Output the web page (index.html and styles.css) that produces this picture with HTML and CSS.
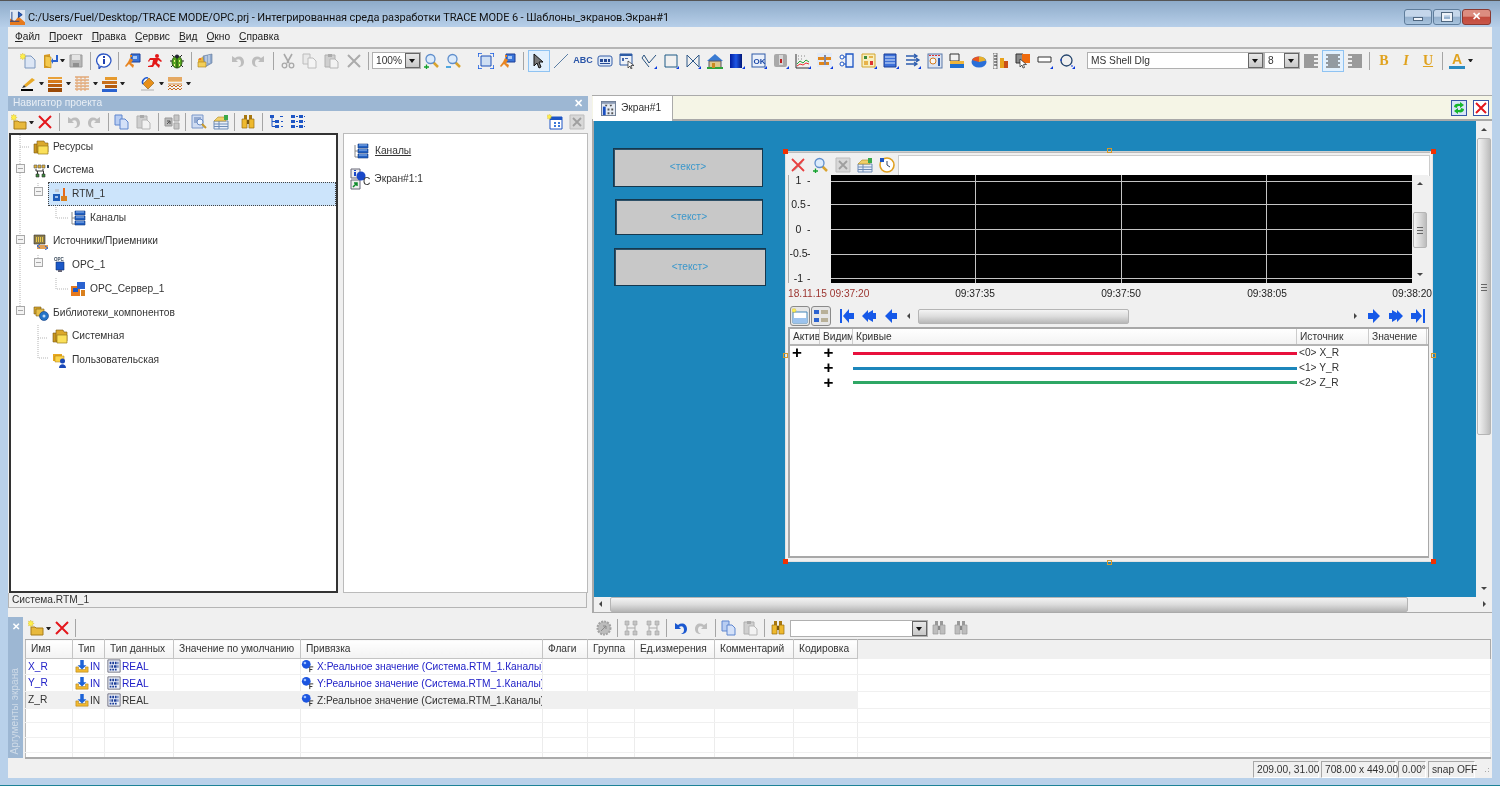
FILE: index.html
```html
<!DOCTYPE html>
<html lang="ru">
<head>
<meta charset="utf-8">
<title>TRACE MODE 6</title>
<link rel="stylesheet" href="styles.css">
</head>
<body>
<svg class="sprite" xmlns="http://www.w3.org/2000/svg">
<defs>
<symbol id="star" viewBox="0 0 16 16"><path d="M4 0l1 2.500L7.500 1.500l-1 2.500 2.500 1-2.500 1 1 2.500-2.500-1-1 2.500-1-2.500-2.500 1 1-2.500-2.500-1 2.500-1-1-2.500 2.500 1z" fill="#fff04a" stroke="#c8a400" stroke-width=".4"/></symbol>
<symbol id="app" viewBox="0 0 16 16"><rect width="16" height="16" fill="#dfe6f2"/><path d="M0 16V9l5 3 4-5 7 6v3z" fill="#e67a1e"/><path d="M2 2v10M0 12h10M9 2l4 3-4 3z" stroke="#1a3f8a" fill="#2a5fc0"/></symbol>
<symbol id="new" viewBox="0 0 16 16"><path d="M5 3h6l4 4v8H5z" fill="#dce6f5" stroke="#7d97bd"/><use href="#star" width="11" height="11"/></symbol>
<symbol id="fnew" viewBox="0 0 16 16"><path d="M3 7h4l1 1h7v7H3z" fill="#e8b93c" stroke="#a87d18"/><use href="#star" width="11" height="11"/></symbol>
<symbol id="open" viewBox="0 0 16 16"><path d="M2 2l6-1v14H2z" fill="#d99a22"/><path d="M3 3l6 1v11l-6-2z" fill="#f4c94e" stroke="#b58418" stroke-width=".6"/><path d="M14 2v5h-3l0-2-2 3 2 3v-2h5V2z" fill="#2a62d0"/></symbol>
<symbol id="save" viewBox="0 0 16 16"><path d="M2 2h12v12H2z" fill="#b8b8b8" stroke="#9a9a9a"/><path d="M4 2h8v5H4z" fill="#e4e4e4"/><path d="M5 10h6v4H5z" fill="#8f8f8f"/></symbol>
<symbol id="info" viewBox="0 0 16 16"><path d="M8 1a7 6.500 0 1 1-3 12.400L3 16v-3.700A7 6.500 0 0 1 8 1z" fill="#fff" stroke="#2b55c4" stroke-width="1.300"/><path d="M7 3h2v2H7zM7 6h2v5H7z" fill="#1f3fb0"/></symbol>
<symbol id="runmap" viewBox="0 0 16 16"><path d="M6 1h9v8H6z" fill="#3a74d8" stroke="#1c3f96"/><path d="M8 3h4v3H8z" fill="#a9c8f5"/><path d="M5 5l3 2-2 3 3 2-1 3-4-4-3 3-1-1 3-4zM5 2h2v2H5z" fill="#e88522"/></symbol>
<symbol id="run" viewBox="0 0 16 16"><circle cx="10" cy="3" r="2" fill="#e21818"/><path d="M8 5l4 0 3 3-1 1-3-2-1 3 3 2-1 3-4-4-2 3-5 0 0-1 4-1 1-5-3 0-1 2-1-1 2-3z" fill="#e21818"/></symbol>
<symbol id="bug" viewBox="0 0 16 16"><path d="M3 2l2 2M13 2l-2 2M1 8h2M15 8h-2M2 14l2-2M14 14l-2-2" stroke="#222"/><ellipse cx="8" cy="9" rx="5" ry="6" fill="#57a81e" stroke="#2a5a10"/><path d="M8 3v12" stroke="#1d3d0a"/><circle cx="8" cy="3.500" r="2" fill="#223"/><path d="M5 7h1v2H5zM10 7h1v2h-1zM5 11h1v2H5zM10 11h1v2h-1z" fill="#ee8"/></symbol>
<symbol id="cube" viewBox="0 0 16 16"><path d="M1 6l7-3v11l-7-1z" fill="#e8b437"/><path d="M6 3l9-2v9l-7 4z" fill="#8fa8cc" stroke="#62789a" stroke-width=".6"/><path d="M9 3v9M12 2v8" stroke="#dfe7f3"/><path d="M1 9h8v5H1z" fill="#f3cf5a" stroke="#a87d18" stroke-width=".6"/><path d="M2 6l1-1 1 1-1 1z" fill="#e33"/></symbol>
<symbol id="undo" viewBox="0 0 16 16"><path d="M3 3v6h6L7 7c3-2 5 0 5 3 0 2-1 3-3 4 4 0 6-2 6-5 0-5-5-7-9-4z" fill="#bdbdbd"/></symbol>
<symbol id="undob" viewBox="0 0 16 16"><path d="M3 3v6h6L7 7c3-2 5 0 5 3 0 2-1 3-3 4 4 0 6-2 6-5 0-5-5-7-9-4z" fill="#1b58d0"/></symbol>
<symbol id="redo" viewBox="0 0 16 16"><path d="M13 3v6H7l2-2c-3-2-5 0-5 3 0 2 1 3 3 4-4 0-6-2-6-5 0-5 5-7 9-4z" fill="#bdbdbd"/></symbol>
<symbol id="cut" viewBox="0 0 16 16"><path d="M4 1l5 9M12 1L7 10" stroke="#a9a9a9" stroke-width="1.600"/><circle cx="4.500" cy="12.500" r="2.300" fill="none" stroke="#a9a9a9" stroke-width="1.300"/><circle cx="11.500" cy="12.500" r="2.300" fill="none" stroke="#a9a9a9" stroke-width="1.300"/></symbol>
<symbol id="copy" viewBox="0 0 16 16"><path d="M1 1h7v10H1z" fill="#e9e9e9" stroke="#bcbcbc"/><path d="M6 5h5l3 3v7H6z" fill="#f4f4f4" stroke="#bcbcbc"/></symbol>
<symbol id="copyb" viewBox="0 0 16 16"><path d="M1 1h7v10H1z" fill="#b8cdf2" stroke="#5f86cf"/><path d="M6 5h5l3 3v7H6z" fill="#d4e1f8" stroke="#5f86cf"/></symbol>
<symbol id="paste" viewBox="0 0 16 16"><path d="M1 2h10v12H1z" fill="#cfcfcf" stroke="#b0b0b0"/><path d="M4 1h4v3H4z" fill="#aaa"/><path d="M6 6h5l3 3v6H6z" fill="#f2f2f2" stroke="#b5b5b5"/></symbol>
<symbol id="xg" viewBox="0 0 16 16"><path d="M2 2l12 12M14 2L2 14" stroke="#ababab" stroke-width="2"/></symbol>
<symbol id="xr" viewBox="0 0 16 16"><path d="M2 2l12 12M14 2L2 14" stroke="#e4171c" stroke-width="2"/></symbol>
<symbol id="zp" viewBox="0 0 16 16"><path d="M9 9l5 5" stroke="#d9a32e" stroke-width="2.500"/><circle cx="6.500" cy="6" r="4.500" fill="#dcebfb" stroke="#5f8ecc" stroke-width="1.300"/><path d="M0 14h5M2.500 11.500v5" stroke="#12a12c" stroke-width="1.300"/></symbol>
<symbol id="zm" viewBox="0 0 16 16"><path d="M9 9l5 5" stroke="#d9a32e" stroke-width="2.500"/><circle cx="6.500" cy="6" r="4.500" fill="#dcebfb" stroke="#5f8ecc" stroke-width="1.300"/><path d="M0 14h5" stroke="#1b8fd8" stroke-width="1.500"/></symbol>
<symbol id="fit" viewBox="0 0 16 16"><path d="M3 3h10v10H3z" fill="#cfdff3" stroke="#1b4fb8"/><path d="M0 4V0h4M12 0h4v4M16 12v4h-4M4 16H0v-4" fill="none" stroke="#1559e0" stroke-width="1.500"/></symbol>
<symbol id="ptr" viewBox="0 0 16 16"><path d="M3 1v12l3-3 2 5 2-1-2-5h4z" fill="#777" stroke="#111"/></symbol>
<symbol id="line" viewBox="0 0 16 16"><path d="M1 15L15 1" stroke="#5a7ea5"/></symbol>
<symbol id="lcd" viewBox="0 0 16 16"><rect x="1" y="3" width="14" height="10" rx="2" fill="#dfe9f7" stroke="#375fa8"/><path d="M3 6h3v3H3zM7 6h3v3H7zM11 6h2v3h-2zM3 10h10v1H3z" fill="#274a94"/></symbol>
<symbol id="win" viewBox="0 0 16 16"><path d="M1 1h12v11H1z" fill="#eef2f8" stroke="#2d5ba5"/><path d="M1 1h12v2H1z" fill="#2d5ba5"/><path d="M3 5h2v3H3zM6 5h3v1H6z" fill="#46a"/><path d="M9 8v7l2-2 1 3 1-.500-1-3h3z" fill="#fff" stroke="#222" stroke-width=".7"/></symbol>
<symbol id="poly" viewBox="0 0 16 16"><path d="M1 5l2-3 5 8 7-8M1 5l7 9" fill="none" stroke="#28527f"/><path d="M13 16h3v-3z" fill="#0a3be0"/></symbol>
<symbol id="rect" viewBox="0 0 16 16"><path d="M2 2h12v12H2z" fill="none" stroke="#1f5a86"/><path d="M13 16h3v-3z" fill="#0a3be0"/></symbol>
<symbol id="bow" viewBox="0 0 16 16"><path d="M2 2l12 12V2L2 14z" fill="none" stroke="#2e5888"/><path d="M13 16h3v-3z" fill="#0a3be0"/></symbol>
<symbol id="house" viewBox="0 0 16 16"><path d="M0 8l8-7 8 7z" fill="#3a7bd2"/><path d="M2 8h12v7H2z" fill="#dfc78a" stroke="#556"/><path d="M0 14h16v2H0z" fill="#2ca33a"/><path d="M5 10h3v5H5z" fill="#ca8b1f"/></symbol>
<symbol id="grad" viewBox="0 0 16 16"><defs><linearGradient id="gb"><stop offset="0" stop-color="#001c9c"/><stop offset=".5" stop-color="#1e57e6"/><stop offset="1" stop-color="#001678"/></linearGradient></defs><rect x="1" y="1" width="12" height="14" fill="url(#gb)"/><path d="M13 16h3v-3z" fill="#0a3be0"/></symbol>
<symbol id="ok" viewBox="0 0 16 16"><rect x="1" y="1" width="13" height="13" fill="#eaf0fa" stroke="#2e5aa8"/><text x="2.500" y="11" font-family="Liberation Sans,sans-serif" font-size="8" font-weight="700" fill="#1d4aa8">OK</text><path d="M13 16h3v-3z" fill="#0a3be0"/></symbol>
<symbol id="slider" viewBox="0 0 16 16"><rect x="1" y="1" width="13" height="13" rx="2" fill="#a9a9a9"/><path d="M6 2h4v10H6z" fill="#d6d6d6"/><path d="M7 6h2v4H7z" fill="#b22"/><path d="M13 16h3v-3z" fill="#0a3be0"/></symbol>
<symbol id="chart" viewBox="0 0 16 16"><path d="M1 1v14h13" fill="none" stroke="#333"/><path d="M3 3h1M6 3h1M9 3h1M3 6h1M6 6h1" stroke="#888"/><path d="M2 11l3-3 3 2 3-3 3 2" fill="none" stroke="#2aa33a"/><path d="M2 13l3-2 3 1 3-2 3 1" fill="none" stroke="#e33"/><path d="M13 16h3v-3z" fill="#0a3be0"/></symbol>
<symbol id="gantt" viewBox="0 0 16 16"><rect width="15" height="14" fill="#e3ebf8"/><path d="M1 4h6v3H1zM9 4h5v3H9zM2 9h5v3H2zM9 9h3v3H9z" fill="#e0861b"/><path d="M8 2v10" stroke="#224" /><path d="M13 16h3v-3z" fill="#0a3be0"/></symbol>
<symbol id="conn" viewBox="0 0 16 16"><path d="M7 1h7v13H7z" fill="#e8f0fc" stroke="#1d55c4" stroke-width="1.300"/><circle cx="3" cy="4" r="2" fill="#fff" stroke="#1d55c4"/><circle cx="3" cy="11" r="2" fill="#fff" stroke="#1d55c4"/><path d="M5 4h2M5 11h2" stroke="#1d55c4"/></symbol>
<symbol id="map" viewBox="0 0 16 16"><path d="M1 1h13v13H1z" fill="#f7eec0" stroke="#d3a52d"/><path d="M3 3h3v3H3z" fill="#3a8a3a"/><path d="M8 3h4v2H8zM3 8h4v4H3z" fill="#e7b34a"/><path d="M9 8h3v4H9z" fill="#d33"/><path d="M13 16h3v-3z" fill="#0a3be0"/></symbol>
<symbol id="list" viewBox="0 0 16 16"><path d="M1 1h12v13H1z" fill="#3d70d8" stroke="#1b3f98"/><path d="M2 4h10M2 7h10M2 10h10" stroke="#dce8fa"/><path d="M13 16h3v-3z" fill="#0a3be0"/></symbol>
<symbol id="arrows" viewBox="0 0 16 16"><path d="M1 3h10M1 7h12M1 11h10M9 1l3 2-3 2M11 5l3 2-3 2M9 9l3 2-3 2" fill="none" stroke="#2c5cae" stroke-width="1.300"/><path d="M13 16h3v-3z" fill="#0a3be0"/></symbol>
<symbol id="gauge" viewBox="0 0 16 16"><rect x="1" y="1" width="14" height="14" fill="#dbe4f2" stroke="#5b78a8"/><path d="M2 2h2v1H2zM5 2h2v1H5zM8 2h2v1H8zM11 2h2v1h-2z" fill="#d33"/><circle cx="6" cy="8" r="3" fill="#f6f6f6" stroke="#d47a1a"/><path d="M11 5h2v8h-2z" fill="#2c5cae"/></symbol>
<symbol id="tabi" viewBox="0 0 16 16"><rect x=".5" y=".5" width="15" height="15" fill="#e4eaf3" stroke="#6a7a92"/><path d="M1 1h14v2H1z" fill="#8a9ab4"/><path d="M4 4l1.500 2L7 4zM9 4l1.500 2L12 4z" fill="#444"/><path d="M2 6h3v9H2z" fill="#1a4fc0"/><path d="M7 8h2v2H7zM11 8h2v2h-2zM7 12h2v2H7zM11 12h2v2h-2z" fill="#555"/></symbol>
<symbol id="tank" viewBox="0 0 16 16"><path d="M1 1h9v7H1z" fill="#f2f2f2" stroke="#333"/><path d="M1 8h14v3H1z" fill="#eeb53a"/><path d="M1 11h14v4H1z" fill="#1e6fd0"/></symbol>
<symbol id="pie" viewBox="0 0 16 16"><ellipse cx="8" cy="9" rx="7.500" ry="5.500" fill="#2a6fd8"/><path d="M8 9V3.500a7.500 5.500 0 0 1 7 4z" fill="#e8b12b"/><path d="M8 9L1 7a7.500 5.500 0 0 1 7-3.500z" fill="#e8551f"/></symbol>
<symbol id="ruler" viewBox="0 0 16 16"><path d="M0 0h4v16H0z" fill="#f0f0f0" stroke="#333" stroke-width=".6"/><path d="M1 3h3M1 6h3M1 9h3M1 12h3" stroke="#222"/><path d="M7 5h4v10H7z" fill="#e8a21c"/><path d="M11 8h4v7h-4z" fill="#c94e18"/></symbol>
<symbol id="curs" viewBox="0 0 16 16"><path d="M1 1h7v9H1z" fill="#888" stroke="#333"/><path d="M7 1h8v9H7z" fill="#ee6a0e"/><path d="M5 6v8l2-2 1 3 1.500-.500-1-3h3z" fill="#fff" stroke="#222" stroke-width=".7"/></symbol>
<symbol id="barr" viewBox="0 0 16 16"><path d="M1 4h13v5H1z" fill="#fff" stroke="#333"/><path d="M13 16h3v-3z" fill="#0a3be0"/></symbol>
<symbol id="circ" viewBox="0 0 16 16"><circle cx="7.500" cy="7.500" r="5.500" fill="none" stroke="#24446c" stroke-width="1.300"/><path d="M1 7h2M12 13h2" stroke="#0a3be0"/><path d="M13 16h3v-3z" fill="#0a3be0"/></symbol>
<symbol id="al" viewBox="0 0 16 16"><path d="M1 2h14M1 4h10M1 6h14M1 8h10M1 10h14M1 12h10M1 14h14" stroke="#444"/></symbol>
<symbol id="ac" viewBox="0 0 16 16"><path d="M1 2h14M3 4h10M1 6h14M3 8h10M1 10h14M3 12h10M1 14h14" stroke="#444"/></symbol>
<symbol id="ar" viewBox="0 0 16 16"><path d="M1 2h14M5 4h10M1 6h14M5 8h10M1 10h14M5 12h10M1 14h14" stroke="#444"/></symbol>
<symbol id="pen" viewBox="0 0 16 16"><path d="M4 9l8-7 3 2-9 7z" fill="#e8a927"/><path d="M4 9l2 2-4 1z" fill="#333"/><path d="M1 13h12v2H1z" fill="#000"/></symbol>
<symbol id="bars" viewBox="0 0 16 16"><path d="M1 1h14v2H1z" fill="#e8a13a"/><path d="M1 4h14v3H1z" fill="#d67a1a"/><path d="M1 8h14v3H1z" fill="#b95e10"/><path d="M1 12h14v4H1z" fill="#9a4a08"/></symbol>
<symbol id="hatch" viewBox="0 0 16 16"><path d="M1 1h14M1 4h14M1 7h14M1 10h14M1 13h14" stroke="#d9843a"/><path d="M3 1v14M7 1v14M11 1v14" stroke="#e4a06a" stroke-dasharray="2 1"/></symbol>
<symbol id="lined" viewBox="0 0 16 16"><path d="M4 1h12v3H4z" fill="#e69a2e"/><path d="M1 5h15v3H1z" fill="#c9701c"/><path d="M4 9h12v3H4z" fill="#b35a0e"/><path d="M1 13h15v3H1z" fill="#2a62d0"/></symbol>
<symbol id="fill" viewBox="0 0 16 16"><path d="M1 13h13v2H1z" fill="#cfcfcf"/><path d="M3 8l6-6 5 5-6 6z" fill="#e8901a" stroke="#8a5a10" stroke-width=".6"/><path d="M3 8c-2-3 2-7 5-6" fill="none" stroke="#1a55d0" stroke-width="1.500"/></symbol>
<symbol id="patt" viewBox="0 0 16 16"><path d="M1 1h14v5H1z" fill="#f0c68a"/><path d="M1 2h14M1 4h14M1 8h14" stroke="#d98a3a"/><path d="M1 11l2-2 2 2 2-2 2 2 2-2 2 2 2-2M1 14l2-2 2 2 2-2 2 2 2-2 2 2 2-2" fill="none" stroke="#c96a1a"/></symbol>
<symbol id="link" viewBox="0 0 16 16"><path d="M1 4h7v8H1z" fill="#b9b9b9" stroke="#999"/><path d="M3 10l3-3M3 7h3v3" fill="none" stroke="#555"/><path d="M10 1h5v6h-5zM10 9h5v6h-5z" fill="#c6c6c6" stroke="#a5a5a5"/></symbol>
<symbol id="dsearch" viewBox="0 0 16 16"><path d="M1 1h11v13H1z" fill="#cfdcf2" stroke="#7a97c8"/><path d="M3 4h7M3 6h4M3 8h3" stroke="#5a7ab0"/><circle cx="9" cy="8" r="3" fill="#eef5ff" stroke="#6a8cc4"/><path d="M11 10l4 4" stroke="#c99a2e" stroke-width="2"/></symbol>
<symbol id="table" viewBox="0 0 16 16"><path d="M1 7h14v8H1z" fill="#e8eef8" stroke="#6f8db8"/><path d="M1 10h14M1 12.500h14M6 7v8" stroke="#6f8db8"/><path d="M1 7l4-4 6 0 2 4z" fill="#f0cf6a" stroke="#b08a20" stroke-width=".6"/><path d="M11 1h4v5h-4z" fill="#3aa84a"/></symbol>
<symbol id="binoc" viewBox="0 0 16 16"><path d="M4 1h3v4H4zM9 1h3v4H9z" fill="#a87810"/><path d="M2 5h5v9H2zM9 5h5v9H9z" fill="#eeb92e" stroke="#9a6f10" stroke-width=".7"/><path d="M7 6h2v4H7z" fill="#7a5810"/></symbol>
<symbol id="binocg" viewBox="0 0 16 16"><path d="M4 1h3v4H4zM9 1h3v4H9z" fill="#999"/><path d="M2 5h5v9H2zM9 5h5v9H9z" fill="#bdbdbd" stroke="#989898" stroke-width=".7"/><path d="M7 6h2v4H7z" fill="#888"/></symbol>
<symbol id="tree" viewBox="0 0 16 16"><path d="M2 1h4v3H2zM7 6h4v3H7zM7 11h4v3H7z" fill="#1d55c4"/><path d="M4 4v8.500h3M4 7.500h3M12 2.500h3M13 7.500h2M13 12.500h2" fill="none" stroke="#1d55c4"/></symbol>
<symbol id="tree2" viewBox="0 0 16 16"><path d="M1 1h4v3H1zM9 1h4v3H9zM1 6h4v3H1zM9 6h4v3H9zM1 11h4v3H1zM9 11h4v3H9z" fill="#1d55c4"/><path d="M6 2.500h2M6 7.500h2M6 12.500h2M14 2.500h1M14 7.500h1M14 12.500h1" stroke="#1d55c4"/></symbol>
<symbol id="stardoc" viewBox="0 0 16 16"><path d="M3 3h12v12H3z" fill="#fff" stroke="#1d55c4"/><path d="M3 3h12v3H3z" fill="#1d55c4"/><path d="M7 8h2v2H7zM11 8h2v2h-2zM7 11h2v2H7zM11 11h2v2h-2z" fill="#3a78d8"/><use href="#star" width="9" height="9"/></symbol>
<symbol id="xbox" viewBox="0 0 16 16"><path d="M1 1h14v14H1z" fill="#d8d8d8" stroke="#bdbdbd"/><path d="M4 4l8 8M12 4l-8 8" stroke="#9f9f9f" stroke-width="1.800"/></symbol>
<symbol id="refresh" viewBox="0 0 16 16"><rect x=".5" y=".5" width="15" height="15" fill="#d8e6f8" stroke="#3656a8"/><path d="M3 7c0-3 3-4 6-3V2l4 3-4 3V6c-2 0-3 0-3 2zM13 9c0 3-3 4-6 3v2l-4-3 4-3v2c2 0 3 0 3-2z" fill="#15b72c"/></symbol>
<symbol id="closer" viewBox="0 0 16 16"><rect x=".5" y=".5" width="15" height="15" fill="#fff" stroke="#3656a8"/><path d="M3 3l10 10M13 3L3 13" stroke="#e4171c" stroke-width="2"/></symbol>
<symbol id="t-res" viewBox="0 0 16 16"><path d="M1 5h8v9H1z" fill="#c9961f" stroke="#7a5810" stroke-width=".6"/><path d="M4 2h7l1 2h3v9H4z" fill="#dca92b" stroke="#7a5810" stroke-width=".6"/><path d="M5 7h10v8H5z" fill="#fbe05a" stroke="#9a7818" stroke-width=".7"/></symbol>
<symbol id="t-sys" viewBox="0 0 16 16"><path d="M1 2h3v3H1zM5 2h3v3H5zM9 2h3v3H9z" fill="#e2b33a" stroke="#555" stroke-width=".6"/><path d="M3 11h3v3H3zM9 11h3v3H9z" fill="#3d8a3d" stroke="#333" stroke-width=".6"/><path d="M3 6v2h7V6M4.500 8v3M10.500 8v3" fill="none" stroke="#333"/><path d="M14 2h2v3h-2z" fill="#345"/></symbol>
<symbol id="t-rtm" viewBox="0 0 16 16"><path d="M1 8h7v7H1z" fill="#1e5cb8"/><path d="M3 3h4v3H3z" fill="#c2c9d4"/><path d="M9 10h6v5H9z" fill="#d9801e"/><path d="M11 2h2v8h-2z" fill="#e66a1a"/><path d="M3 10h3v2H3z" fill="#9fc0ee"/></symbol>
<symbol id="t-ch" viewBox="0 0 16 16"><path d="M2 2v12h3M2 8h3" fill="none" stroke="#888"/><path d="M5 1h10v4H5zM5 6h10v4H5zM5 11h10v4H5z" fill="#2361c4" stroke="#123a80" stroke-width=".6"/><path d="M6 2h8M6 7h8M6 12h8" stroke="#9cc0f0"/></symbol>
<symbol id="t-src" viewBox="0 0 16 16"><path d="M1 1h11v9H1z" fill="#8a7a4a" stroke="#333" stroke-width=".6"/><path d="M3 3h1v5H3zM5 3h1v5H5zM7 3h1v5H7zM9 3h1v5H9z" fill="#e8c84a"/><path d="M4 12h11M4 14h11" stroke="#d9801e" stroke-width="1.300"/><path d="M7 10l-3 2 3 2M12 12l3 2-3 2" fill="none" stroke="#2a62d0"/></symbol>
<symbol id="t-opc" viewBox="0 0 16 16"><text x="2" y="4" font-family="Liberation Sans,sans-serif" font-size="4.500" font-weight="700" fill="#345">OPC</text><path d="M4 5h8v8H4z" fill="#1a58c8" stroke="#0e2f70" stroke-width=".6"/><path d="M6 13h4v2H6z" fill="#667"/></symbol>
<symbol id="t-opcs" viewBox="0 0 16 16"><path d="M1 5h9v10H1z" fill="#e67a1e"/><path d="M3 7h5v4H3z" fill="#1a58c8"/><path d="M7 1h8v7H7z" fill="#2a62d0"/><path d="M11 9h4v6h-4z" fill="#d9801e"/></symbol>
<symbol id="t-lib" viewBox="0 0 16 16"><path d="M1 2h7v7H1z" fill="#d6a92e" stroke="#7a5810" stroke-width=".6"/><path d="M3 4h8v7H3z" fill="#e7c04a" stroke="#7a5810" stroke-width=".6"/><circle cx="11" cy="11" r="4.500" fill="#2474c8" stroke="#123a80" stroke-width=".6"/><circle cx="11" cy="11" r="1.500" fill="#bcd8f6"/></symbol>
<symbol id="t-usr" viewBox="0 0 16 16"><path d="M1 2h9v7H1z" fill="#e8a81e"/><path d="M3 4h9v6H3z" fill="#fbd44a" stroke="#a87818" stroke-width=".5"/><circle cx="10.500" cy="9" r="2.500" fill="#1a48b8"/><path d="M7 16c0-5 7-5 7 0z" fill="#1a48b8"/></symbol>
<symbol id="t-scr" viewBox="0 0 20 22"><path d="M1 1h9v9H1zM1 12h9v9H1z" fill="#eee" stroke="#667"/><circle cx="11" cy="8" r="4.500" fill="#1a48c8"/><path d="M4 2h2v1H4zM4 4h2v4H4z" fill="#1a48c8"/><path d="M3 19l4-4M4 15h3v3" fill="none" stroke="#0d8a2a" stroke-width="1.500"/></symbol>
<symbol id="tin" viewBox="0 0 16 16"><path d="M1 9v6h14V9h-3v3H4V9z" fill="#f2b92e" stroke="#a87d18" stroke-width=".6"/><path d="M6 1h4v6h3l-5 5-5-5h3z" fill="#1d63d8"/></symbol>
<symbol id="treal" viewBox="0 0 16 16"><path d="M1 1h14v14H1z" fill="#eef2fa" stroke="#667"/><path d="M3 3h2v3H3zM6 3h2v3H6zM9 3h2v3H9zM12 3h1v3h-1zM3 7h1v3H3zM5 7h2v3H5zM8 7h3v3H8zM12 7h1v3h-1zM3 11h2v2H3zM6 11h2v2H6zM9 11h2v2H9z" fill="#1b3d98"/></symbol>
<symbol id="tbind" viewBox="0 0 16 16"><circle cx="6" cy="6" r="5" fill="#1c55e0"/><circle cx="4.500" cy="4.500" r="1.500" fill="#9cc0ff"/><path d="M10 15V9h4M10 12h3" fill="none" stroke="#222"/></symbol>
<symbol id="tx" viewBox="0 0 16 16"><path d="M3 13l8-8" stroke="#bbb" stroke-width="2"/><path d="M1 2l12 12M13 2L1 14" stroke="#e84040" stroke-width="1.800"/></symbol>
<symbol id="clock" viewBox="0 0 16 16"><circle cx="8" cy="8" r="7" fill="#fff" stroke="#e0a020" stroke-width="1.600"/><path d="M8 4v4l3 2" fill="none" stroke="#346"/><path d="M1 1h4v4H1z" fill="#1d55c4"/></symbol>
<symbol id="tg1" viewBox="0 0 16 16"><path d="M1 4h14v11H1z" fill="#fff" stroke="#48b"/><path d="M1 10h14v5H1z" fill="#9cc3ee"/><use href="#star" width="8" height="8"/></symbol>
<symbol id="tg2" viewBox="0 0 16 16"><path d="M1 2h5v4H1zM1 10h5v4H1z" fill="#2a62d0"/><path d="M8 3h7M8 5h7M8 11h7M8 13h7" stroke="#8a7a4a"/></symbol>
<symbol id="nfirst" viewBox="0 0 16 16"><path d="M1 1h2v14H1zM4 8l6-7v4h5v6h-5v4z" fill="#1659e8"/></symbol>
<symbol id="nprev2" viewBox="0 0 16 16"><path d="M1 8l6-6v3l5-3v3h3v6h-3v3l-5-3v3z" fill="#1659e8"/></symbol>
<symbol id="nprev" viewBox="0 0 16 16"><path d="M2 8l7-7v4h5v6H9v4z" fill="#1659e8"/></symbol>
<symbol id="nnext" viewBox="0 0 16 16"><path d="M14 8L7 1v4H2v6h5v4z" fill="#1659e8"/></symbol>
<symbol id="nnext2" viewBox="0 0 16 16"><path d="M15 8L9 2v3L4 2v3H1v6h3v3l5-3v3z" fill="#1659e8"/></symbol>
<symbol id="nlast" viewBox="0 0 16 16"><path d="M15 1h-2v14h2zM12 8L6 1v4H1v6h5v4z" fill="#1659e8"/></symbol>
<symbol id="gear" viewBox="0 0 16 16"><circle cx="8" cy="8" r="6.500" fill="#bcbcbc" stroke="#a2a2a2" stroke-width="2" stroke-dasharray="2 1"/><path d="M5 11l5-5M7 6h3v3" fill="none" stroke="#8a8a8a"/></symbol>
<symbol id="grp" viewBox="0 0 16 16"><path d="M2 1h4v4H2zM10 1h4v4h-4zM2 11h4v4H2zM10 11h4v4h-4z" fill="#c4c4c4" stroke="#a5a5a5" stroke-width=".6"/><path d="M4 5v6M12 5v6M4 8h8" stroke="#aaa"/></symbol>
</defs>
</svg>

<div class="win">
  <header class="title">
    <svg class="app"><use href="#app"/></svg>
    <span class="title-text">C:/Users/Fuel/Desktop/TRACE MODE/OPC.prj - Интегрированная среда разработки TRACE MODE 6 - Шаблоны_экранов.Экран#1</span>
    <div class="caps">
      <span class="cap"><i class="cap-min"></i></span>
      <span class="cap"><i class="cap-max"></i></span>
      <span class="cap cap-close">✕</span>
    </div>
  </header>

  <div class="client">
    <nav class="menu">
      <span><u>Ф</u>айл</span><span><u>П</u>роект</span><span><u>П</u>равка</span><span><u>С</u>ервис</span><span><u>В</u>ид</span><span><u>О</u>кно</span><span><u>С</u>правка</span>
    </nav>

    <div class="tb tb-main">
      <i class="grip g9"></i>
      <svg><use href="#new"/></svg><svg><use href="#open"/></svg><i class="dd t"></i><svg><use href="#save"/></svg>
      <i class="s s6"></i><svg><use href="#info"/></svg><i class="s s7"></i>
      <svg><use href="#runmap"/></svg><svg><use href="#run"/></svg><svg><use href="#bug"/></svg>
      <i class="s s6"></i><svg><use href="#cube"/></svg><i class="grip g10"></i>
      <svg><use href="#undo"/></svg><svg><use href="#redo"/></svg><i class="s s7"></i>
      <svg><use href="#cut"/></svg><svg><use href="#copy"/></svg><svg><use href="#paste"/></svg><svg><use href="#xg"/></svg><i class="s s7"></i>
      <span class="combo c-zoom"><span class="combo-v">100%</span><i class="combo-b"></i></span>
      <svg><use href="#zp"/></svg><svg><use href="#zm"/></svg><i class="grip g10"></i>
      <svg><use href="#fit"/></svg><svg><use href="#runmap"/></svg><i class="s s9"></i>
      <span class="on"><svg><use href="#ptr"/></svg></span>
      <svg><use href="#line"/></svg><span class="abc">ABC</span><svg><use href="#lcd"/></svg><svg><use href="#win"/></svg>
      <svg><use href="#poly"/></svg><svg><use href="#rect"/></svg><svg><use href="#bow"/></svg><svg><use href="#house"/></svg>
      <svg><use href="#grad"/></svg><svg><use href="#ok"/></svg><svg><use href="#slider"/></svg><svg><use href="#chart"/></svg>
      <svg><use href="#gantt"/></svg><svg><use href="#conn"/></svg><svg><use href="#map"/></svg><svg><use href="#list"/></svg>
      <svg><use href="#arrows"/></svg><svg><use href="#gauge"/></svg><svg><use href="#tank"/></svg><svg><use href="#pie"/></svg>
      <svg><use href="#ruler"/></svg><svg><use href="#curs"/></svg><svg><use href="#barr"/></svg><svg><use href="#circ"/></svg>
      <i class="grip g9"></i>
      <span class="combo c-font"><span class="combo-v">MS Shell Dlg</span><i class="combo-b"></i></span>
      <span class="combo c-size"><span class="combo-v">8</span><i class="combo-b"></i></span>
      <svg><use href="#al"/></svg><span class="on"><svg><use href="#ac"/></svg></span><svg><use href="#ar"/></svg><i class="s s7"></i>
      <span class="fmt fmt-b">B</span><span class="fmt fmt-i">I</span><span class="fmt fmt-u">U</span><i class="s s7"></i>
      <span class="fmt fmt-a">A</span><i class="dd"></i>
    </div>
    <div class="tb">
      <i class="grip g9"></i>
      <svg><use href="#pen"/></svg><i class="dd"></i><svg><use href="#bars"/></svg><i class="dd"></i>
      <svg><use href="#hatch"/></svg><i class="dd"></i><svg><use href="#lined"/></svg><i class="dd"></i>
      <i class="grip g12"></i>
      <svg><use href="#fill"/></svg><i class="dd"></i><svg><use href="#patt"/></svg><i class="dd"></i>
    </div>

    <div class="work">
      <section class="nav">
        <div class="dock-head"><span>Навигатор проекта</span><b>✕</b></div>
        <div class="tb tb-nav">
          <svg><use href="#fnew"/></svg><i class="dd t"></i><svg><use href="#xr"/></svg><i class="s s6"></i>
          <svg><use href="#undo"/></svg><svg><use href="#redo"/></svg><i class="s s5"></i>
          <svg><use href="#copyb"/></svg><svg><use href="#paste"/></svg><i class="s s6"></i>
          <svg><use href="#link"/></svg><i class="s s5"></i>
          <svg><use href="#dsearch"/></svg><svg><use href="#table"/></svg><i class="s s5"></i>
          <svg><use href="#binoc"/></svg><i class="s s6"></i>
          <svg><use href="#tree"/></svg><svg><use href="#tree2"/></svg>
          <svg class="push"><use href="#stardoc"/></svg><svg><use href="#xbox"/></svg>
        </div>
        <div class="panes">
          <div class="tree">
            <svg class="links"><path d="M9 0v178M9 12h10M27 48v6M27 120v6M45 72v11h12M45 143v11h12M27 190v33h10M27 203h10"/></svg>
            <div class="row lv0"><i class="exp none"></i><div class="node"><svg><use href="#t-res"/></svg>Ресурсы</div></div>
            <div class="row lv0"><i class="exp"></i><div class="node"><svg><use href="#t-sys"/></svg>Система</div></div>
            <div class="row lv1"><i class="exp"></i><div class="node sel"><svg><use href="#t-rtm"/></svg>RTM_1</div></div>
            <div class="row lv2"><div class="node"><svg><use href="#t-ch"/></svg>Каналы</div></div>
            <div class="row lv0"><i class="exp"></i><div class="node"><svg><use href="#t-src"/></svg>Источники/Приемники</div></div>
            <div class="row lv1"><i class="exp"></i><div class="node"><svg><use href="#t-opc"/></svg>OPC_1</div></div>
            <div class="row lv2"><div class="node"><svg><use href="#t-opcs"/></svg>OPC_Сервер_1</div></div>
            <div class="row lv0"><i class="exp"></i><div class="node"><svg><use href="#t-lib"/></svg>Библиотеки_компонентов</div></div>
            <div class="row lv1"><i class="exp none"></i><div class="node"><svg><use href="#t-res"/></svg>Системная</div></div>
            <div class="row lv1"><i class="exp none"></i><div class="node"><svg><use href="#t-usr"/></svg>Пользовательская</div></div>
          </div>
          <div class="files">
            <div class="file"><svg><use href="#t-ch"/></svg><u>Каналы</u></div>
            <div class="file file-scr"><svg class="scr"><use href="#t-scr"/></svg><em>C</em>Экран#1:1</div>
          </div>
        </div>
        <div class="crumb">Система.RTM_1</div>
      </section>

      <section class="editor">
        <div class="tabs">
          <div class="tab"><svg><use href="#tabi"/></svg>Экран#1</div>
          <svg class="push"><use href="#refresh"/></svg><svg><use href="#closer"/></svg>
        </div>
        <div class="edit-grid">
          <div class="canvas">
            <div class="wbtn wb1">&lt;текст&gt;</div>
            <div class="wbtn wb2">&lt;текст&gt;</div>
            <div class="wbtn wb3">&lt;текст&gt;</div>
            <div class="trend">
              <i class="hd hd-c hd-tl"></i><i class="hd hd-c hd-tr"></i><i class="hd hd-c hd-bl"></i><i class="hd hd-c hd-br"></i>
              <i class="hd hd-t"></i><i class="hd hd-b"></i><i class="hd hd-l"></i><i class="hd hd-r"></i>
              <div class="tr-tools">
                <svg><use href="#tx"/></svg><svg><use href="#zp"/></svg><svg><use href="#xbox"/></svg><svg><use href="#table"/></svg><svg><use href="#clock"/></svg>
                <div class="tr-strip"></div>
              </div>
              <div class="tr-plot">
                <div class="yaxis">
                  <div><span>1</span>-</div><div><span>0.5</span>-</div><div><span>0</span>-</div><div><span>-0.5</span>-</div><div><span>-1</span>-</div>
                </div>
                <svg class="plot"><path d="M0 6.500h581M0 29.500h581M0 54.500h581M0 79.500h581M0 103.500h581M144.500 0v108M290.500 0v108M435.500 0v108"/></svg>
                <div class="vsb vsb-s"><i class="up"></i><b class="vt vt-s"></b><i class="down"></i></div>
              </div>
              <div class="tr-time">
                <span class="t0">18.11.15 09:37:20</span><span>09:37:35</span><span>09:37:50</span><span>09:38:05</span><span class="tl">09:38:20</span>
              </div>
              <div class="tr-nav">
                <span class="tg"><svg><use href="#tg1"/></svg></span><span class="tg"><svg><use href="#tg2"/></svg></span>
                <svg class="ml8"><use href="#nfirst"/></svg><svg><use href="#nprev2"/></svg><svg><use href="#nprev"/></svg>
                <div class="hsb hsb-s"><i class="lf"></i><b class="ht ht-s"></b><i class="rt"></i></div>
                <svg><use href="#nnext"/></svg><svg><use href="#nnext2"/></svg><svg><use href="#nlast"/></svg>
              </div>
              <div class="curves">
                <div class="cv-head"><span>Актив</span><span>Видим</span><span>Кривые</span><span>Источник</span><span>Значение</span></div>
                <div class="cv-row"><b>+</b><b>+</b><i class="cl cl-r"></i><span>&lt;0&gt; X_R</span></div>
                <div class="cv-row"><b></b><b>+</b><i class="cl cl-b"></i><span>&lt;1&gt; Y_R</span></div>
                <div class="cv-row"><b></b><b>+</b><i class="cl cl-g"></i><span>&lt;2&gt; Z_R</span></div>
              </div>
            </div>
          </div>
          <div class="vsb"><i class="up"></i><b class="vt vt-m"></b><i class="down"></i></div>
          <div class="hsb hsb-m"><i class="lf"></i><b class="ht ht-m"></b><i class="rt"></i></div>
        </div>
      </section>
    </div>

    <section class="args">
      <div class="args-side"><b>✕</b><span>Аргументы экрана</span></div>
      <div class="args-main">
        <div class="tb tb-args">
          <svg><use href="#fnew"/></svg><i class="dd t"></i><svg><use href="#xr"/></svg><i class="s s5"></i>
          <i class="args-gap"></i>
          <svg><use href="#gear"/></svg><i class="s s5"></i><svg><use href="#grp"/></svg><svg><use href="#grp"/></svg><i class="s s5"></i>
          <svg><use href="#undob"/></svg><svg><use href="#redo"/></svg><i class="s s5"></i>
          <svg><use href="#copyb"/></svg><svg><use href="#paste"/></svg><i class="s s5"></i>
          <svg><use href="#binoc"/></svg>
          <span class="combo c-find"><span class="combo-v"></span><i class="combo-b"></i></span>
          <svg><use href="#binocg"/></svg><svg><use href="#binocg"/></svg>
        </div>
        <table class="grid">
          <colgroup><col class="c1"><col class="c2"><col class="c3"><col class="c4"><col class="c5"><col class="c6"><col class="c7"><col class="c8"><col class="c9"><col class="c10"><col></colgroup>
          <thead><tr><th>Имя</th><th>Тип</th><th>Тип данных</th><th>Значение по умолчанию</th><th>Привязка</th><th>Флаги</th><th>Группа</th><th>Ед.измерения</th><th>Комментарий</th><th>Кодировка</th><th class="th-rest"></th></tr></thead>
          <tbody>
            <tr class="r16 blue"><td>X_R</td><td><svg><use href="#tin"/></svg>IN</td><td><svg><use href="#treal"/></svg>REAL</td><td></td><td><svg class="bind"><use href="#tbind"/></svg>X:Реальное значение (Система.RTM_1.Каналы)</td><td></td><td></td><td></td><td></td><td></td><td></td></tr>
            <tr class="r17 blue"><td>Y_R</td><td><svg><use href="#tin"/></svg>IN</td><td><svg><use href="#treal"/></svg>REAL</td><td></td><td><svg class="bind"><use href="#tbind"/></svg>Y:Реальное значение (Система.RTM_1.Каналы)</td><td></td><td></td><td></td><td></td><td></td><td></td></tr>
            <tr class="r17 cur"><td>Z_R</td><td><svg><use href="#tin"/></svg>IN</td><td><svg><use href="#treal"/></svg>REAL</td><td></td><td><svg class="bind"><use href="#tbind"/></svg>Z:Реальное значение (Система.RTM_1.Каналы)</td><td></td><td></td><td></td><td></td><td></td><td class="nocur"></td></tr>
            <tr class="r14"><td></td><td></td><td></td><td></td><td></td><td></td><td></td><td></td><td></td><td></td><td></td></tr>
            <tr class="r15"><td></td><td></td><td></td><td></td><td></td><td></td><td></td><td></td><td></td><td></td><td></td></tr>
            <tr class="r15"><td></td><td></td><td></td><td></td><td></td><td></td><td></td><td></td><td></td><td></td><td></td></tr>
            <tr class="r6"><td></td><td></td><td></td><td></td><td></td><td></td><td></td><td></td><td></td><td></td><td></td></tr>
          </tbody>
        </table>
      </div>
    </section>

    <footer class="status">
      <span class="p1">209.00, 31.00</span><span class="p2">708.00 x 449.00</span><span class="p3">0.00°</span><span class="p4">snap OFF</span><i class="size-grip"></i>
    </footer>
  </div>
</div>
</body>
</html>
```

FILE: styles.css
```css
* { box-sizing: border-box; }
html, body { margin: 0; padding: 0; height: 100%; overflow: hidden; }
body { font: 10.200px/1.2 "Liberation Sans", Arial, sans-serif; color: #222; }
i, b, em { font-style: normal; }
.sprite { position: absolute; width: 0; height: 0; }

.win { width: 1500px; height: 786px; display: flex; flex-direction: column; background: #b9d1ea; border-top: 1px solid #555; border-bottom: 1px solid #1d8296; filter: blur(.3px); }
.title { height: 26px; flex: none; display: flex; align-items: center; padding: 6px 9px 0 10px; background: linear-gradient(#8eabc9, #b7cfe9); }
.app { width: 15px; height: 15px; margin-right: 3px; }
.title-text { font: 11px Roboto, sans-serif; letter-spacing: -.115px; color: #111; white-space: nowrap; }
.caps { margin-left: auto; display: flex; gap: 1px; align-self: flex-start; margin-top: 2px; }
.cap { width: 28px; height: 16px; border: 1px solid #5f7d9b; border-radius: 3px; background: linear-gradient(#c4d6ea 45%, #94b0cd 50%, #a9c4de); display: flex; align-items: center; justify-content: center; }
.cap-min { width: 10px; height: 4px; background: #eef3f9; border: 1px solid #4f6780; margin-top: 4px; }
.cap-max { width: 10px; height: 8px; background: transparent; border: 2px solid #eef3f9; outline: 1px solid #4f6780; }
.cap-close { width: 29px; background: linear-gradient(#dc8d80 45%, #c24a3c 50%, #c9574a); border-color: #8a3a32; color: #fff; font-size: 11px; font-weight: 700; }

.client { flex: 1; min-height: 0; margin: 0 8px 7px; background: #f0f0f0; display: flex; flex-direction: column; }
.menu { height: 22px; flex: none; display: flex; align-items: center; padding: 0 0 0 7px; gap: 9px; border-bottom: 2px solid #b5b5b5; }

.tb { height: 23px; flex: none; display: flex; align-items: center; }
.tb > svg, .on > svg { width: 16px; height: 16px; margin: 0 3px; flex: none; }
.push { margin-left: auto !important; }
.grip { display: block; height: 20px; flex: none; background: radial-gradient(circle, #b5b5b5 40%, transparent 45%) 1px 0 / 2px 2px; background-clip: content-box; padding-left: 2px; }
.g9 { width: 9px; padding-right: 3px; }
.g10 { width: 10px; padding-left: 4px; padding-right: 2px; }
.g12 { width: 12px; padding-left: 4px; padding-right: 4px; }
.s { display: block; height: 20px; flex: none; background: linear-gradient(#a5a5a5, #a5a5a5) center / 1px 18px no-repeat; }
.s5 { width: 5px; } .s6 { width: 6px; } .s7 { width: 7px; } .s9 { width: 9px; }
.dd { display: block; width: 5px; height: 3px; flex: none; border-style: solid; border-width: 3px 2.500px 0; border-color: #222 transparent transparent; }
.dd.t { margin-left: -1px; }
.on { width: 22px; height: 22px; flex: none; display: flex; align-items: center; background: #e2f0fd; border: 1px solid #8fc3f2; }
.on > svg { margin: 0 2px; }
.abc { width: 22px; flex: none; text-align: center; font-size: 9px; font-weight: 700; color: #2a55a8; }
.fmt { width: 22px; flex: none; text-align: center; font: 700 14px "Liberation Serif", serif; color: #e0a21e; }
.fmt-i { font-style: italic; }
.fmt-u { text-decoration: underline; }
.fmt-a { font: 700 14px "Liberation Sans", sans-serif; border-bottom: 3px solid #2a8ac0; margin: 0 3px; width: 16px; line-height: 13px; }

.combo { height: 17px; flex: none; display: flex; background: #fff; border: 1px solid #b0b0b0; }
.combo-v { flex: 1; padding-left: 3px; line-height: 15px; color: #333; white-space: nowrap; }
.combo-b { width: 15px; flex: none; background: linear-gradient(#e8e8e8, #c8c8c8); border: 1px solid #666; position: relative; }
.combo-b::after { content: ""; position: absolute; left: 3px; top: 5px; border-style: solid; border-width: 4px 3.500px 0; border-color: #111 transparent transparent; }
.c-zoom { width: 49px; } .c-font { width: 177px; } .c-size { width: 36px; }
.c-find { width: 138px; margin-left: 1px; }

.work { flex: none; height: 518px; display: flex; gap: 4px; }
.nav { width: 580px; flex: none; display: flex; flex-direction: column; padding: 1px 0 5px; }
.dock-head { height: 15px; flex: none; display: flex; align-items: center; justify-content: space-between; padding: 0 5px; background: #9db7d3; color: #e8eef5; }
.dock-head b { color: #fff; font-size: 11px; }
.tb-nav { height: 22px; }
.panes { flex: 1; min-height: 0; display: flex; gap: 5px; padding-left: 1px; }
.tree { width: 329px; flex: none; background: #fff; border: 2px solid #333; position: relative; }
.links { position: absolute; left: 0; top: 0; width: 325px; height: 240px; fill: none; stroke: #b5b5b5; stroke-dasharray: 1 1; pointer-events: none; }
.row { height: 23.700px; display: flex; align-items: center; position: relative; }
.node { flex: 1; height: 100%; display: flex; align-items: center; gap: 4px; padding-left: 4px; color: #333; }
.node svg { width: 16px; height: 16px; flex: none; }
.exp { width: 9px; height: 9px; flex: none; margin-right: 4px; margin-top: -5px; border: 1px solid #a8a8a8; background: linear-gradient(#a8a8a8, #a8a8a8) center / 5px 1px no-repeat, #f4f4f4; }
.exp.none { border: 0; background: none; }
.lv0 { padding-left: 5px; }
.lv1 { padding-left: 23px; }
.lv1 .exp { margin-right: 5px; }
.lv2 { padding-left: 59px; }
.lv2 .node { padding-left: 0; }
.sel { background: #cce4fb; border: 1px dotted #444; padding-left: 3px; }
.files { flex: 1; background: #fff; border: 1px solid #bbb; padding: 9px 0 0 9px; }
.file { height: 16px; display: flex; align-items: center; gap: 6px; color: #333; }
.file svg { width: 16px; height: 16px; flex: none; }
.file-scr { margin-top: 12px; position: relative; gap: 0; }
.file-scr .scr { width: 20px; height: 22px; margin-left: -3px; }
.file-scr em { margin-right: 4px; margin-left: -7px; align-self: flex-end; margin-bottom: -1px; }
.crumb { height: 15px; flex: none; border: 1px solid #b5b5b5; border-top: 0; margin-right: 1px; padding-left: 3px; line-height: 14px; color: #333; }

.editor { flex: 1; min-width: 0; display: flex; flex-direction: column; border-top: 1px solid #aaa; }
.tabs { height: 25px; flex: none; display: flex; align-items: center; background: #f5f5e6; border-bottom: 2px solid #a8a8a8; padding-right: 3px; }
.tabs > svg { width: 16px; height: 16px; margin-left: 6px; flex: none; }
.tabs > svg.push { margin-left: auto; }
.tab { width: 80px; height: 25px; margin-left: 1px; flex: none; background: #fff; border-right: 1px solid #aaa; display: flex; align-items: center; gap: 5px; padding-left: 8px; color: #333; align-self: flex-start; }
.tab svg { width: 15px; height: 15px; }
.edit-grid { flex: 1; min-height: 0; display: grid; grid-template-columns: 1fr 16px; grid-template-rows: 1fr 15px; border-left: 2px solid #aaa; border-bottom: 1px solid #aaa; }
.canvas { background: #1c86bb; position: relative; overflow: hidden; }

.wbtn { position: absolute; display: flex; align-items: center; justify-content: center; background: #c8c8c8; border: 1px solid #16384e; box-shadow: inset 1px 1px 0 #2e5168; color: #3a97cb; }
.wb1 { left: 19px; top: 27px; width: 150px; height: 39px; }
.wb2 { left: 21px; top: 78px; width: 148px; height: 36px; }
.wb3 { left: 20px; top: 127px; width: 152px; height: 38px; }

.trend { position: absolute; left: 191px; top: 30px; width: 648px; height: 411px; background: #f0f0f0; border: 1px solid #e2e2e2; border-top-color: #cfcfcf; padding: 0 3px 3px 2px; display: flex; flex-direction: column; }
.hd { position: absolute; width: 5px; height: 5px; border: 1px solid #d89a2a; }
.hd-c { border: 2px solid #f03000; background: #f03000; }
.hd-tl { left: -3px; top: -3px; } .hd-tr { right: -4px; top: -3px; }
.hd-bl { left: -3px; bottom: -3px; } .hd-br { right: -4px; bottom: -3px; }
.hd-t { left: 321px; top: -4px; } .hd-b { left: 321px; bottom: -4px; }
.hd-l { left: -3px; top: 201px; } .hd-r { right: -4px; top: 201px; }
.tr-tools { height: 24px; flex: none; display: flex; align-items: center; border-top: 1px solid #bbb; margin-right: -1px; }
.tr-tools > svg { width: 16px; height: 16px; margin: 0 3px; flex: none; }
.tr-strip { flex: 1; align-self: stretch; margin-top: 2px; background: #fff; border: 1px solid #ccc; border-bottom: 0; }
.tr-plot { height: 108px; flex: none; display: flex; border-left: 1px solid #aaa; margin-top: -1px; }
.yaxis { width: 42px; flex: none; margin-top: -7.500px; font-size: 10.500px; color: #222; }
.yaxis div { height: 24.600px; display: flex; align-items: center; }
.yaxis span { width: 19px; text-align: center; margin-right: -1px; }
.plot { width: 581px; height: 108px; flex: none; background: #000; fill: none; stroke: #c4c4c4; }
.vsb { display: flex; flex-direction: column; background: #f0f0f0; position: relative; }
.vsb-s { width: 16px; flex: none; }
.up, .down, .lf, .rt { display: block; flex: none; position: relative; }
.up, .down { height: 17px; }
.up::after, .down::after { content: ""; position: absolute; left: 5px; border-style: solid; }
.up::after { top: 7px; border-width: 0 3px 3px; border-color: transparent transparent #444; }
.down::after { bottom: 7px; border-width: 3px 3px 0; border-color: #444 transparent transparent; }
.vt { display: block; flex: none; background: linear-gradient(90deg, #f4f4f4, #d4d4d4 60%, #bcbcbc); border: 1px solid #b5b5b5; border-radius: 2px; margin: 0 1px; }
.vt::after { content: ""; display: block; width: 6px; height: 7px; margin: 0 auto; background: repeating-linear-gradient(#666 0 1px, transparent 1px 3px); position: relative; top: calc(50% - 3px); }
.vt-s { height: 36px; margin-top: 20px; }
.vt-s + .down { margin-top: auto; }
.vt-m { height: 297px; }
.vt-m + .down { margin-top: auto; }
.tr-time { height: 22px; flex: none; display: grid; grid-template-columns: 114px 146px 146px 146px 90px; align-items: center; padding-top: 1px; }
.tr-time span { white-space: nowrap; }
.tr-time span:not(.t0):not(.tl) { justify-self: center; width: 146px; text-align: center; }
.t0 { color: #9c3530; }
.tl { text-align: right; justify-self: end; margin-right: -2px; }
.tr-nav { height: 22px; flex: none; display: flex; align-items: center; }
.tr-nav > svg { width: 16px; height: 16px; margin: 0 3px; flex: none; }
.tr-nav > .ml8 { margin-left: 8px; }
.tg { width: 20px; height: 20px; margin-left: 1px; flex: none; display: flex; align-items: center; justify-content: center; background: #e6e6e6; border: 1px solid #8a8a8a; border-radius: 3px; }
.tg:first-child { margin-left: 2px; }
.tg svg { width: 16px; height: 16px; }
.hsb { display: flex; align-items: stretch; background: #f0f0f0; }
.hsb-s { width: 461px; flex: none; height: 15px; }
.hsb-m { grid-column: 1 / 3; }
.lf, .rt { width: 16px; }
.lf::after, .rt::after { content: ""; position: absolute; top: 4px; border-style: solid; }
.lf::after { left: 5px; border-width: 3px 3px 3px 0; border-color: transparent #444 transparent transparent; }
.rt::after { right: 6px; border-width: 3px 0 3px 3px; border-color: transparent transparent transparent #444; }
.ht { display: block; flex: none; background: linear-gradient(#f4f4f4, #dcdcdc 50%, #b8b8b8); border: 1px solid #b5b5b5; border-radius: 2px; }
.ht-s { width: 211px; }
.ht-s + .rt, .ht-m + .rt { margin-left: auto; }
.ht-m { width: 798px; }
.curves { flex: 1; min-height: 0; background: #fff; border: 2px solid #a8a8a8; border-right-width: 1px; }
.cv-head { height: 15px; display: grid; grid-template-columns: 30px 33px 444px 72px 58px; background: linear-gradient(#fff, #f3f3f3); border-bottom: 2px solid #b5b5b5; box-sizing: content-box; color: #333; }
.cv-head span { padding-left: 3px; line-height: 15px; border-right: 1px solid #ccc; white-space: nowrap; overflow: hidden; }
.cv-row { height: 14.700px; display: grid; grid-template-columns: 30px 33px 444px 1fr; align-items: center; }
.cv-row b { font: 700 17px/14px "Liberation Sans", sans-serif; color: #000; text-align: center; padding-right: 16px; }
.cv-row span { padding-left: 2px; color: #333; }
.cl { height: 3px; display: block; }
.cl-r { background: #e8103c; } .cl-b { background: #1c86bb; } .cl-g { background: #2fa765; }

.args { flex: none; height: 141px; margin-top: 4px; display: flex; gap: 2px; }
.args-side { width: 15px; flex: none; background: #9db7d3; display: flex; flex-direction: column; align-items: center; justify-content: space-between; padding: 4px 0 3px; color: #fff; }
.args-side span { writing-mode: vertical-rl; transform: rotate(180deg); color: #cfdbe8; white-space: nowrap; }
.args-main { flex: 1; min-width: 0; display: flex; flex-direction: column; }
.tb-args { height: 22px; }
.args-gap { width: 515px; flex: none; }
.grid { width: 1466px; table-layout: fixed; border-collapse: collapse; background: #fff; border-top: 1px solid #aaa; border-right: 1px solid #aaa; border-bottom: 2px solid #aaa; border-left: 1px solid #bbb; }
.c1 { width: 47px; } .c2 { width: 32px; } .c3 { width: 69px; } .c4 { width: 127px; } .c5 { width: 242px; }
.c6 { width: 45px; } .c7 { width: 47px; } .c8 { width: 80px; } .c9 { width: 79px; } .c10 { width: 64px; }
.grid th { height: 19px; padding: 0 0 0 5px; font-weight: 400; text-align: left; color: #333; white-space: nowrap; overflow: hidden; background: linear-gradient(#fff, #f2f2f2); border-right: 1px solid #c4c4c4; border-bottom: 1px solid #c4c4c4; }
.grid .th-rest { background: #f0f0f0; border: 0; }
.grid td { padding: 0; border-right: 1px solid #ececec; border-bottom: 1px solid #f0f0f0; white-space: nowrap; overflow: hidden; color: #333; line-height: 14px; }
.grid td:first-child { padding-left: 2px; }
.grid td svg { width: 14px; height: 14px; vertical-align: -3px; margin: 0 1px 0 2px; }
.grid td svg.bind { margin: 0 2px 0 0; }
.r17 td { height: 17px; } .r16 td { height: 16px; } .r15 td { height: 15px; } .r14 td { height: 14px; } .r6 td { height: 5px; }
.blue td { color: #2222c8; }
.cur td { background: #f0f0f0; border-right-color: #f0f0f0; }
.cur td.nocur { background: #fff; }

.status { flex: none; height: 18px; margin-top: 2px; display: flex; align-items: center; padding-left: 1245px; gap: 2px; color: #333; }
.status span { height: 17px; line-height: 16px; border: 1px solid #fff; border-top-color: #a8a8a8; border-left-color: #a8a8a8; padding-left: 3px; white-space: nowrap; flex: none; }
.p1 { width: 66px; } .p2 { width: 75px; } .p3 { width: 28px; } .p4 { width: 47px; }
.size-grip { width: 10px; height: 10px; margin-left: 4px; background: radial-gradient(circle, #aaa 40%, transparent 45%) 0 0 / 3px 3px; clip-path: polygon(100% 0, 100% 100%, 0 100%); }
```
